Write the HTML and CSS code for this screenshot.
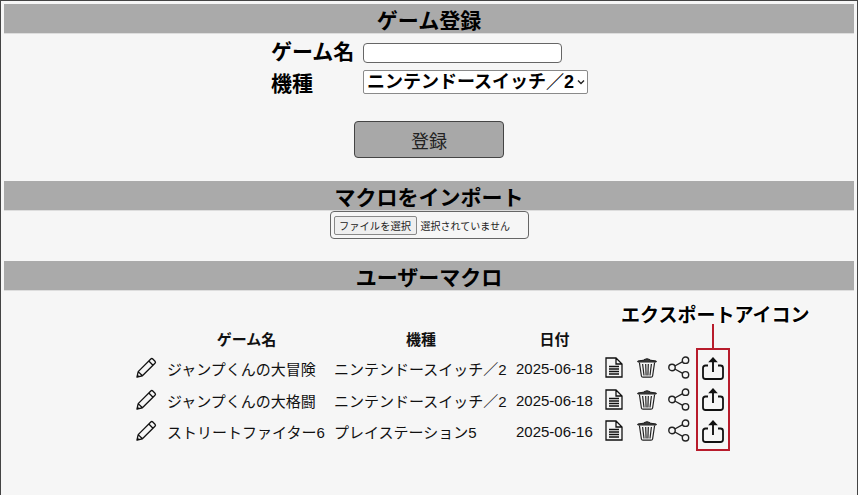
FILE: index.html
```html
<!DOCTYPE html>
<html lang="ja">
<head>
<meta charset="utf-8">
<title>ゲーム登録</title>
<link rel="stylesheet" href="styles.css">
</head>
<body>
<svg class="defs" width="0" height="0" aria-hidden="true">
  <symbol id="i-pencil" viewBox="0 0 21 21"><path d="M1 20 L2.2 14.6 L14.8 2 Q15.8 1 16.8 2 L19 4.2 Q20 5.2 19 6.2 L6.4 18.8 Z M2.2 14.6 L6.4 18.8 M12.8 4 L17 8.2" fill="none" stroke="#111" stroke-width="1.3" stroke-linejoin="round"/><path d="M.8 20.2 L1.5 17.4 L3.6 19.5 Z" fill="#111"/></symbol>
  <symbol id="i-doc" viewBox="0 0 18 21"><path d="M1 1 H11 L17 7 V20 H1 Z M11 1 V7 H17 M4 9.5 H14 M4 12 H14 M4 14.5 H14 M4 17 H14" fill="none" stroke="#111" stroke-width="1.3"/></symbol>
  <symbol id="i-trash" viewBox="0 0 20 21"><path d="M.8 4 Q10 1.4 19.2 4 V5 H.8 Z M7 2.6 Q10 .8 13 2.6" fill="#444" stroke="#222" stroke-width="1"/><path d="M2.4 5.5 L4.4 19 Q4.6 20.2 6 20.2 H14 Q15.4 20.2 15.6 19 L17.6 5.5 M5.6 7 L7 18.5 M8.7 7 L9.1 18.5 M11.3 7 L10.9 18.5 M14.4 7 L13 18.5" fill="none" stroke="#222" stroke-width="1.2"/></symbol>
  <symbol id="i-share" viewBox="0 0 22 23"><circle cx="17.5" cy="4.2" r="3.2" fill="none" stroke="#222" stroke-width="1.4"/><circle cx="4" cy="11.5" r="3.2" fill="none" stroke="#222" stroke-width="1.4"/><circle cx="17.5" cy="18.8" r="3.2" fill="none" stroke="#222" stroke-width="1.4"/><path d="M6.8 10 L14.7 5.7 M6.8 13 L14.7 17.3" fill="none" stroke="#222" stroke-width="1.4"/></symbol>
  <symbol id="i-export" viewBox="0 0 22 24"><path d="M6 9.5 H3.5 Q1 9.5 1 12 V20.5 Q1 23 3.5 23 H18.5 Q21 23 21 20.5 V12 Q21 9.5 18.5 9.5 H16" fill="none" stroke="#111" stroke-width="1.8"/><path d="M11 16 V2" fill="none" stroke="#111" stroke-width="1.9"/><path d="M6.2 6.2 L11 1 L15.8 6.2 Z" fill="#111"/></symbol>
</svg>
<main class="page">
  <h2 class="bar">ゲーム登録</h2>
  <form class="game-form">
    <div class="fields">
      <label class="label label-name" for="name">ゲーム名</label>
      <input class="name-input" id="name" type="text">
      <label class="label label-kind" for="kind">機種</label>
      <select class="kind-select" id="kind"><option>ニンテンドースイッチ／2</option></select>
    </div>
    <button class="submit" type="button">登録</button>
  </form>
  <h2 class="bar">マクロをインポート</h2>
  <div class="import-row">
    <div class="file-box"><button class="file-btn" type="button">ファイルを選択</button><span class="file-note">選択されていません</span></div>
  </div>
  <h2 class="bar bar-user">ユーザーマクロ</h2>
  <div class="macro-wrap">
    <table class="macros">
      <thead>
        <tr><th class="c-edit"></th><th class="c-game">ゲーム名</th><th class="c-kind">機種</th><th class="c-date">日付</th><th class="c-act"></th><th class="c-act"></th><th class="c-act"></th><th class="c-act"></th></tr>
      </thead>
      <tbody>
        <tr>
          <td class="cell-icon"><svg class="ic ic-pencil"><use href="#i-pencil"/></svg></td>
          <td class="cell-text">ジャンプくんの大冒険</td><td class="cell-text">ニンテンドースイッチ／2</td><td class="cell-text">2025-06-18</td>
          <td class="cell-icon"><svg class="ic ic-doc"><use href="#i-doc"/></svg></td>
          <td class="cell-icon"><svg class="ic ic-trash"><use href="#i-trash"/></svg></td>
          <td class="cell-icon"><svg class="ic ic-share"><use href="#i-share"/></svg></td>
          <td class="cell-icon"><svg class="ic ic-export"><use href="#i-export"/></svg></td>
        </tr>
        <tr>
          <td class="cell-icon"><svg class="ic ic-pencil"><use href="#i-pencil"/></svg></td>
          <td class="cell-text">ジャンプくんの大格闘</td><td class="cell-text">ニンテンドースイッチ／2</td><td class="cell-text">2025-06-18</td>
          <td class="cell-icon"><svg class="ic ic-doc"><use href="#i-doc"/></svg></td>
          <td class="cell-icon"><svg class="ic ic-trash"><use href="#i-trash"/></svg></td>
          <td class="cell-icon"><svg class="ic ic-share"><use href="#i-share"/></svg></td>
          <td class="cell-icon"><svg class="ic ic-export"><use href="#i-export"/></svg></td>
        </tr>
        <tr>
          <td class="cell-icon"><svg class="ic ic-pencil"><use href="#i-pencil"/></svg></td>
          <td class="cell-text">ストリートファイター6</td><td class="cell-text">プレイステーション5</td><td class="cell-text">2025-06-16</td>
          <td class="cell-icon"><svg class="ic ic-doc"><use href="#i-doc"/></svg></td>
          <td class="cell-icon"><svg class="ic ic-trash"><use href="#i-trash"/></svg></td>
          <td class="cell-icon"><svg class="ic ic-share"><use href="#i-share"/></svg></td>
          <td class="cell-icon"><svg class="ic ic-export"><use href="#i-export"/></svg></td>
        </tr>
      </tbody>
    </table>
  </div>
  <div class="callout-label">エクスポートアイコン</div>
  <div class="callout-line"></div>
  <div class="callout-box"></div>
</main>
</body>
</html>
```
FILE: styles.css
```css
* { box-sizing: border-box; }
html, body { margin: 0; height: 100%; }
body {
  background: #f6f6f6;
  color: #000;
  font-family: "Liberation Sans", "Noto Sans CJK JP", sans-serif;
  overflow: hidden;
}
.defs { position: absolute; }
.page {
  position: relative;
  height: 495px;
  padding: 3px 3px 0;
  border-top: 1px solid #444;
  border-left: 1px solid #444;
  border-right: 1px solid #444;
}
.bar {
  margin: 0;
  height: 30px;
  background: #aaa;
  border-bottom: 1px solid #ddd;
  text-align: center;
  font-size: 21px;
  font-weight: 700;
  line-height: 34px;
}
.game-form { height: 147px; display: flex; flex-direction: column; align-items: center; }
.fields {
  margin: 8px 0 0 1px;
  display: grid;
  grid-template-columns: 92px 225px;
  grid-template-rows: 28px 24px;
  justify-items: start;
}
.label { font-size: 21px; font-weight: 700; line-height: 24px; }
.label-name { margin-top: -2px; }
.label-kind { margin-top: 2px; }
.name-input {
  width: 199px;
  height: 20px;
  margin-top: 1px;
  padding: 0 4px;
  background: #fff;
  border: 1px solid #666;
  border-radius: 4px;
}
.kind-select {
  appearance: none;
  width: 225px;
  height: 24px;
  padding: 0 0 0 3px;
  background: #fff url("data:image/svg+xml,%3Csvg xmlns='http://www.w3.org/2000/svg' width='8' height='6'%3E%3Cpath d='M1 1.5 L4 4.5 L7 1.5' fill='none' stroke='%23222' stroke-width='1.4'/%3E%3C/svg%3E") no-repeat right 2px center;
  border: 1px solid #8a8a8a;
  border-radius: 2px;
  font-family: inherit;
  font-size: 18px;
  font-weight: 700;
  color: #000;
}
.submit {
  margin-top: 27px;
  width: 150px;
  height: 37px;
  flex: none;
  background: #a8a8a8;
  border: 1px solid #444;
  border-radius: 4px;
  font-family: inherit;
  font-size: 18px;
  color: #222;
}
.import-row { height: 50px; display: flex; justify-content: center; align-items: flex-start; }
.file-box {
  width: 199px;
  height: 28px;
  display: flex;
  align-items: center;
  padding-left: 3px;
  background: #f6f6f6;
  border: 1px solid #666;
  border-radius: 4px;
  font-size: 10px;
  color: #222;
}
.file-btn {
  width: 83px;
  height: 19px;
  margin-right: 3px;
  padding: 0;
  background: #efefef;
  border: 1px solid #888;
  border-radius: 2px;
  font-family: inherit;
  font-size: 10.3px;
  color: #222;
}
.file-note { padding-left: 1px; }
.macro-wrap { display: flex; padding: 32px 0 0 129px; }
.macros { border-collapse: collapse; table-layout: fixed; width: 596px; font-size: 15px; color: #111; }
.macros th { height: 30px; padding: 0; text-align: center; font-size: 15px; font-weight: 700; vertical-align: middle; }
.macros td { height: 31.5px; padding: 0; vertical-align: middle; white-space: nowrap; }
.macros .cell-text { padding-left: 4px; }
.c-edit { width: 30px; }
.c-game { width: 167px; }
.c-kind { width: 182px; }
.c-date { width: 85px; }
.c-act { width: 33px; }
.ic { display: block; margin-top: -2px; }
.ic-pencil { width: 21px; height: 21px; margin-left: 3px; }
.ic-doc { width: 18px; height: 21px; margin-left: 8px; }
.ic-trash { width: 20px; height: 21px; margin-left: 7px; }
.ic-share { width: 22px; height: 23px; margin-left: 5px; }
.ic-export { width: 22px; height: 24px; margin-left: 6px; }
.callout-label {
  position: absolute;
  left: 620px;
  top: 302px;
  font-size: 19px;
  font-weight: 700;
  line-height: 26px;
  white-space: nowrap;
  text-shadow: 0 0 3px #fff, 0 0 3px #fff, 0 0 3px #fff;
}
.callout-line { position: absolute; left: 711px; top: 323px; width: 2px; height: 25px; background: #b81c2c; }
.callout-box { position: absolute; left: 695px; top: 347px; width: 34px; height: 103px; border: 2px solid #b81c2c; }
```
